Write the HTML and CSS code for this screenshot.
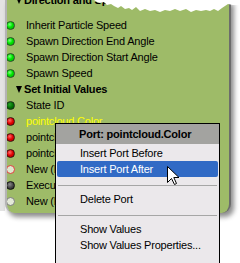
FILE: index.html
```html
<html lang="en">

<head>
    <meta charset="UTF-8">
    <meta name="viewport" content="width=device-width, initial-scale=1.0">
    <title>Ports</title>
    <link rel="stylesheet" href="styles.css">
</head>

<body>
<div class="stage">
    <div class="rail"></div>

    <div class="panel">
        <div class="row head first"><span class="tri"></span>Direction and Speed</div>
        <div class="row"><span class="port on"></span>Inherit Particle Speed</div>
        <div class="row"><span class="port on"></span>Spawn Direction End Angle</div>
        <div class="row"><span class="port on"></span>Spawn Direction Start Angle</div>
        <div class="row"><span class="port on"></span>Spawn Speed</div>
        <div class="row head"><span class="tri"></span>Set Initial Values</div>
        <div class="row"><span class="port dark"></span>State ID</div>
        <div class="row picked"><span class="port red"></span><span class="label">pointcloud.Color</span></div>
        <!-- these labels sit under the popup menu, only their start shows -->
        <div class="row"><span class="port red"></span><span class="label clip">pointcloud.Position</span></div>
        <div class="row"><span class="port red"></span><span class="label clip">pointcloud.Velocity</span></div>
        <div class="row"><span class="port ring-red"></span><span class="label clip">New (Expose)</span></div>
        <div class="row"><span class="port exec"></span><span class="label clip">Execute</span></div>
        <div class="row"><span class="port ring"></span><span class="label clip">New (Expose)</span></div>
    </div>

    <!-- torn paper edge along the top -->
    <svg class="tear" width="240" height="14" viewBox="0 0 240 14">
        <polygon fill="#fff" points="0,0 94,0 97,2 100,3 104,2 107,5 111,4 114,6 118,8 121,6 125,9 129,8 132,10 136,7 140,11 145,9 150,11 155,10 160,12 165,10 170,11 175,9 180,11 186,9 191,12 196,10 201,11 206,10 210,11 214,9 218,11 222,8 225,6 228,4 233,5 240,5 240,0"/>
    </svg>

    <div class="menu">
        <div class="menu-title">Port: pointcloud.Color</div>
        <div class="menu-body">
            <div class="item">Insert Port Before</div>
            <div class="item active">Insert Port After</div>
            <div class="sep"></div>
            <div class="item">Delete Port</div>
            <div class="sep"></div>
            <div class="item">Show Values</div>
            <div class="item">Show Values Properties...</div>
        </div>
    </div>

    <svg class="cursor" width="13" height="20" viewBox="0 0 13 20">
        <path d="M0.5 0.5 L0.5 16.5 L4.5 12.5 L7.5 18.5 L9.5 17.5 L6.8 11.5 L12 11.5 Z" fill="#fff" stroke="#000" stroke-width="1" stroke-linejoin="miter"/>
    </svg>
</div>
</body>

</html>
```

FILE: styles.css
```css
body {
    margin: 0;
    background-color: white;
    font-family: "Liberation Sans", Arial, sans-serif;
    font-size: 11px;
    letter-spacing: -0.2px;
    color: black;
}

.stage {
    position: relative;
    width: 240px;
    height: 263px;
    overflow: hidden;
    display: flex;
    align-items: flex-start;
}

.rail {
    width: 5px;
    height: 211px;
    background: #e3e3e3;
}

.panel {
    width: 226px;
    height: 213px;
    box-sizing: border-box;
    background-color: #9ebb68;
    border-left: 2px solid #b4b4b4;
    border-right: 2px solid #6c6c6c;
    border-radius: 0 0 9px 9px;
    box-shadow: 3px 4px 5px rgba(0, 0, 0, 0.45);
    overflow: hidden;
}

.row {
    display: flex;
    align-items: center;
    height: 16px;
    white-space: nowrap;
}

.row.first {
    margin-top: -8px;
    margin-bottom: 9px;
}

.head {
    font-weight: bold;
    padding-left: 9px;
}

.tri {
    width: 0;
    height: 0;
    border-left: 3.5px solid transparent;
    border-right: 3.5px solid transparent;
    border-top: 7px solid black;
    margin-right: 2px;
}

.picked {
    color: #ffff00;
}

.label.clip {
    max-width: 29px;
    overflow: hidden;
}

.port {
    flex: none;
    width: 9px;
    height: 9px;
    box-sizing: border-box;
    border-radius: 50%;
    margin: 0 11px 0 -1px;
    border: 1px solid #1f3a1f;
}

.port.on {
    background: radial-gradient(circle at 40% 35%, #7dff7d 0, #00e600 45%, #00b400 100%);
    border-color: #245024;
}

.port.dark {
    background: radial-gradient(circle at 40% 35%, #2aa02a 0, #007000 55%, #005200 100%);
    border-color: #1c2e1c;
}

.port.red {
    background: radial-gradient(circle at 40% 35%, #ff6a6a 0, #e00000 50%, #a80000 100%);
    border-color: #3a1010;
}

.port.ring-red {
    background: #dfe8cf;
    border-color: #e03c3c;
}

.port.exec {
    background: radial-gradient(circle at 40% 35%, #8a8a8a 0, #444 55%, #222 100%);
    border-color: #111;
}

.port.ring {
    background: #e4ead8;
    border-color: #7c7c7c;
}

.tear {
    position: absolute;
    left: 0;
    top: 0;
}

.menu {
    position: absolute;
    left: 55px;
    top: 123px;
    width: 165px;
    height: 150px;
    box-sizing: border-box;
    border: 1px solid black;
    background-color: #ebe8eb;
}

.menu-title {
    height: 20px;
    line-height: 20px;
    background-color: #a3a3a0;
    font-weight: bold;
    padding-left: 23px;
}

.menu-body {
    padding-top: 1px;
}

.item {
    height: 16px;
    line-height: 16px;
    margin: 0 1px;
    padding-left: 23px;
    border-radius: 2px;
    white-space: nowrap;
}

.item.active {
    background-color: #316ac5;
    color: white;
}

.sep {
    height: 1px;
    margin: 8px 2px 5px;
    background-color: #a6a6a6;
}

.cursor {
    position: absolute;
    left: 167px;
    top: 166px;
}
```
